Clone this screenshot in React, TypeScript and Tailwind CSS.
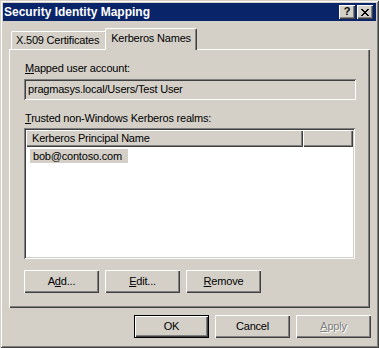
import React from "react";

const raised =
  "shadow-[inset_1px_1px_#ffffff,inset_-1px_-1px_#404040,inset_-2px_-2px_#808080]";
const sunken =
  "shadow-[inset_1px_1px_#808080,inset_-1px_-1px_#ffffff,inset_2px_2px_#404040,inset_-2px_-2px_#d4d0c8]";

const Btn = ({
  children,
  def = false,
  disabled = false,
}: {
  children: React.ReactNode;
  def?: boolean;
  disabled?: boolean;
}) => {
  if (def) {
    return (
      <div className="w-[75px] h-[23px] border border-black">
        <div className={`w-full h-full flex items-center justify-center ${raised}`}>
          {children}
        </div>
      </div>
    );
  }
  return (
    <div
      className={`w-[75px] h-[23px] flex items-center justify-center ${raised} ${
        disabled ? "text-[#808080] [text-shadow:1px_1px_#ffffff]" : ""
      }`}
    >
      {children}
    </div>
  );
};

const CaptionBtn = ({ children }: { children: React.ReactNode }) => (
  <div className="w-[16px] h-[14px] bg-[#d4d0c8] flex items-center justify-center shadow-[inset_1px_1px_#ffffff,inset_-1px_-1px_#404040,inset_-2px_-2px_#808080]">
    {children}
  </div>
);

export default function App() {
  return (
    <div className="w-[379px] h-[348px] bg-[#d4d0c8] p-[3px] flex flex-col text-black text-[11px] tracking-[-0.2px] font-['Liberation_Sans',Arial,sans-serif] shadow-[inset_1px_1px_#d4d0c8,inset_-1px_-1px_#404040,inset_2px_2px_#ffffff,inset_-2px_-2px_#808080]">
      {/* title bar */}
      <div className="h-[18px] bg-[#0a246a] flex items-center justify-between pl-[1px] pr-[3px]">
        <span className="text-white font-bold text-[12px] tracking-normal leading-none">
          Security Identity Mapping
        </span>
        <div className="flex gap-[2px]">
          <CaptionBtn>
            <span className="font-bold text-[11px] leading-none tracking-normal -mt-[1px]">?</span>
          </CaptionBtn>
          <CaptionBtn>
            <svg width="8" height="7" viewBox="0 0 8 7" shapeRendering="crispEdges">
              <path d="M0 0h2v1H0zM1 1h2v1H1zM2 2h2v1H2zM3 3h2v1H3zM2 4h2v1H2zM1 5h2v1H1zM0 6h2v1H0zM6 0h2v1H6zM5 1h2v1H5zM4 2h2v1H4zM4 4h2v1H4zM5 5h2v1H5zM6 6h2v1H6z" fill="#000" />
            </svg>
          </CaptionBtn>
        </div>
      </div>

      {/* tabs */}
      <div className="mt-[7px] mx-[6px] h-[21px] flex items-end pl-[2px]">
        <div className="w-[96px] h-[18px] border-t border-l border-r border-t-white border-l-white border-r-[#404040] rounded-t-[2px] shadow-[inset_-1px_0_#808080] flex items-center pl-[4px]">
          X.509 Certificates
        </div>
        <div className="relative z-10 -ml-[2px] -mb-[1px] w-[92px] h-[22px] bg-[#d4d0c8] border-t border-l border-r border-t-white border-l-white border-r-[#404040] rounded-t-[2px] shadow-[inset_-1px_0_#808080] flex items-center justify-center pb-[2px]">
          Kerberos Names
        </div>
      </div>

      {/* panel */}
      <div className={`mx-[6px] h-[259px] pl-[15px] pt-[13px] flex flex-col ${raised}`}>
        <div className="h-[13px] leading-[13px] ml-[1px]">
          <span className="underline">M</span>apped user account:
        </div>
        <div className={`mt-[4px] w-[332px] h-[21px] flex items-center pl-[4px] ${sunken}`}>
          pragmasys.local/Users/Test User
        </div>
        <div className="mt-[12px] h-[13px] leading-[13px] ml-[1px]">
          <span className="underline">T</span>rusted non-Windows Kerberos realms:
        </div>
        <div className={`mt-[3px] w-[331px] h-[131px] bg-white p-[2px] ${sunken}`}>
          <div className="flex h-[17px] bg-[#d4d0c8]">
            <div className={`w-[277px] h-full flex items-center pl-[6px] ${raised}`}>
              Kerberos Principal Name
            </div>
            <div className={`flex-1 h-full ${raised}`} />
          </div>
          <div className="mt-[2px] ml-[4px] w-[98px] h-[14px] bg-[#d4d0c8] leading-[14px] pl-[3px]">
            bob@contoso.com
          </div>
        </div>
        <div className="mt-[11px] flex gap-[6px]">
          <Btn>
            A<span className="underline">d</span>d...
          </Btn>
          <Btn>
            <span className="underline">E</span>dit...
          </Btn>
          <Btn>
            <span className="underline">R</span>emove
          </Btn>
        </div>
      </div>

      {/* dialog buttons */}
      <div className="mt-[7px] flex justify-end gap-[6px] pr-[5px]">
        <Btn def>OK</Btn>
        <Btn>Cancel</Btn>
        <Btn disabled>
          <span className="underline">A</span>pply
        </Btn>
      </div>
    </div>
  );
}
